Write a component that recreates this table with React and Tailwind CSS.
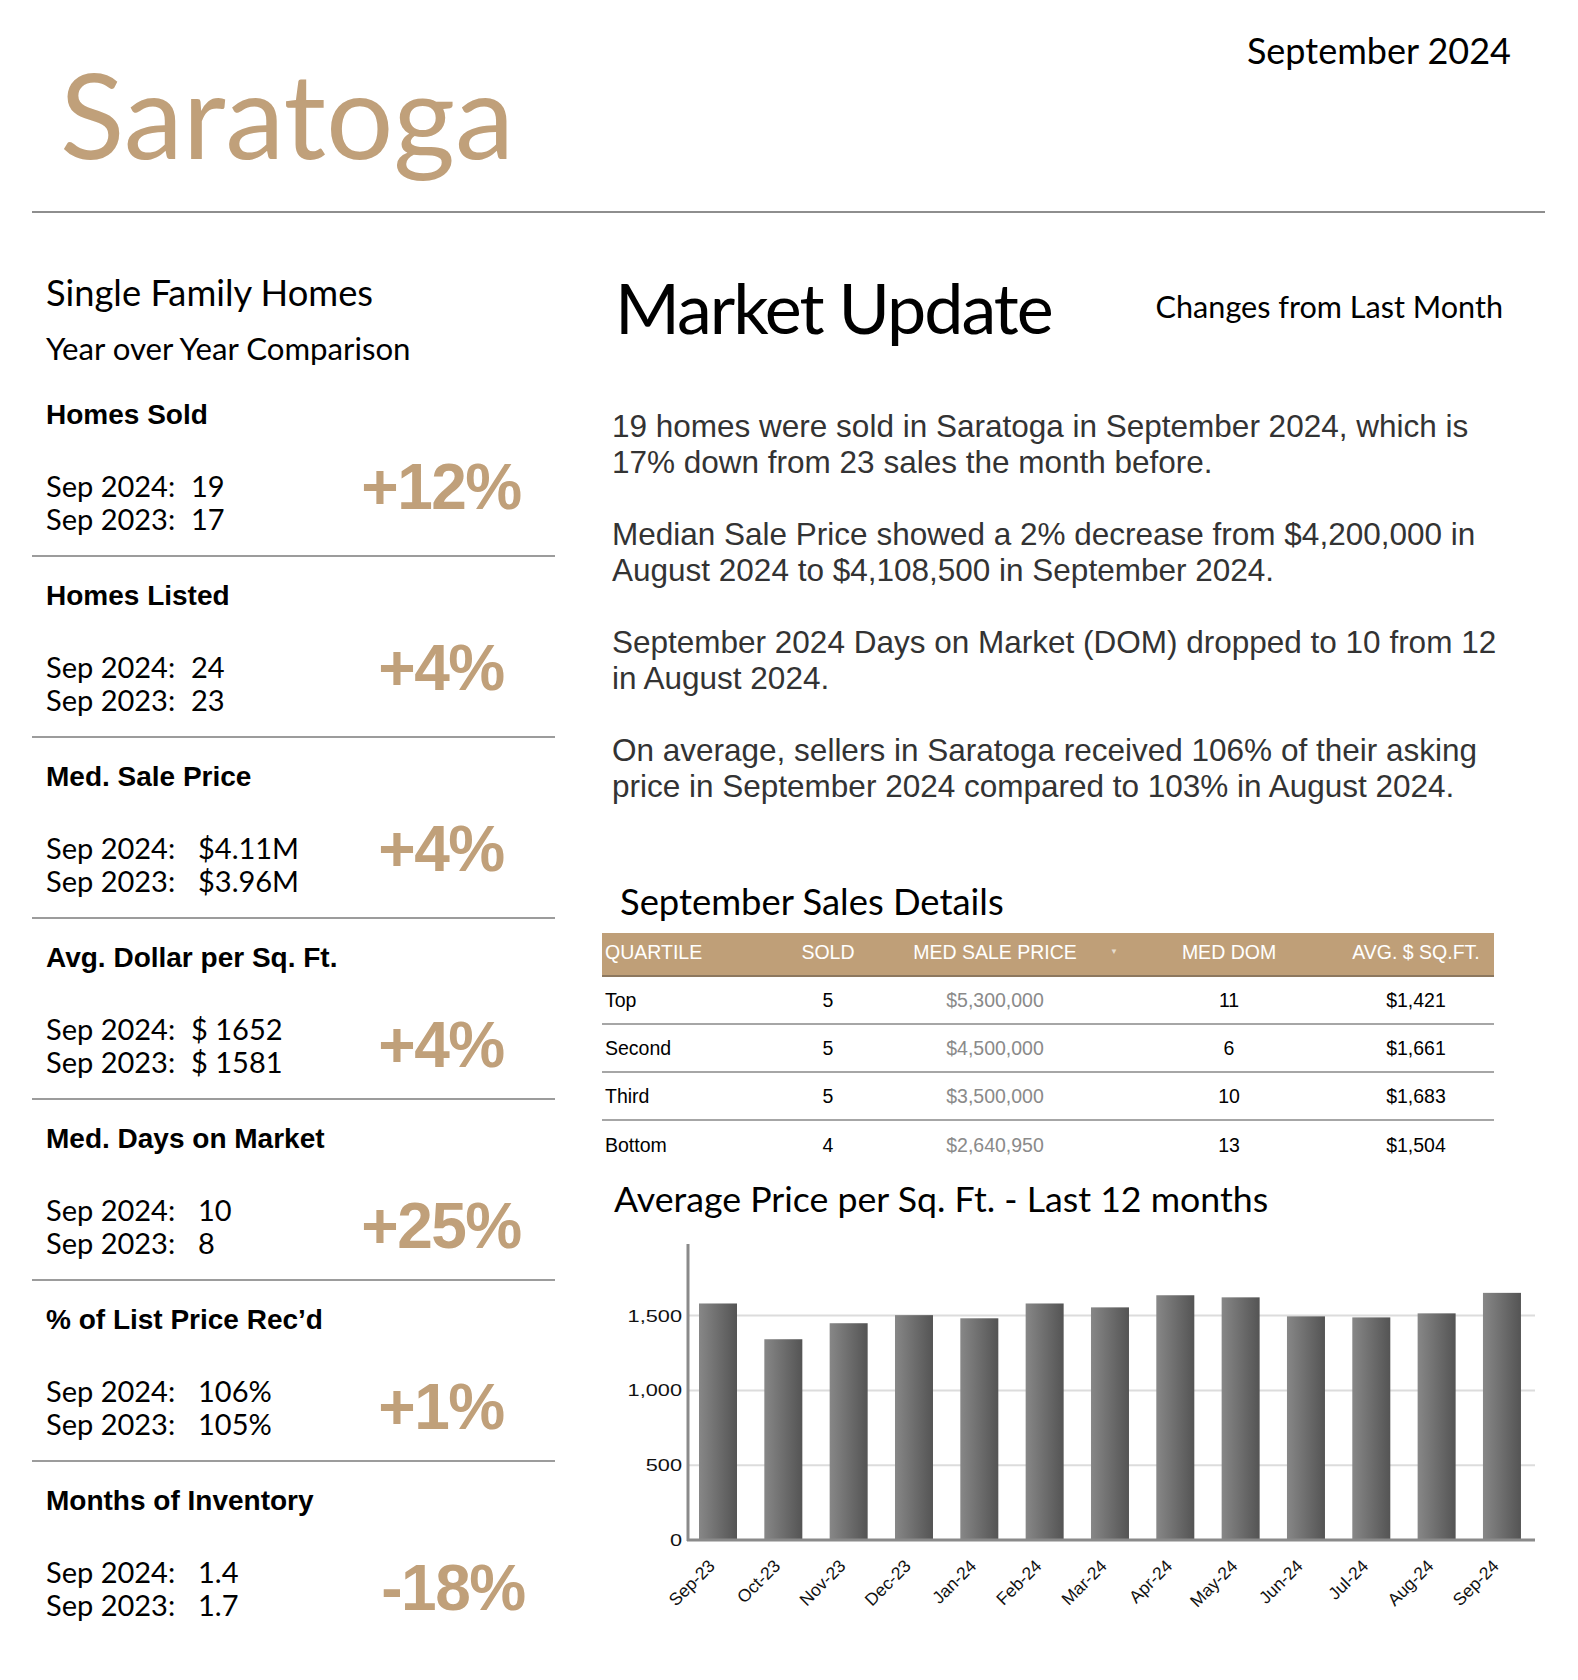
import React from "react";

const sections = [
  { title: "Homes Sold", a: "19", b: "17", pct: "+12%", wide: false, raise: true, shift: false },
  { title: "Homes Listed", a: "24", b: "23", pct: "+4%", wide: false, raise: true, shift: false },
  { title: "Med. Sale Price", a: "$4.11M", b: "$3.96M", pct: "+4%", wide: true, raise: true, shift: false },
  { title: "Avg. Dollar per Sq. Ft.", a: "$ 1652", b: "$ 1581", pct: "+4%", wide: false, raise: false, shift: false },
  { title: "Med. Days on Market", a: "10", b: "8", pct: "+25%", wide: true, raise: false, shift: false },
  { title: "% of List Price Rec\u2019d", a: "106%", b: "105%", pct: "+1%", wide: true, raise: false, shift: false },
  { title: "Months of Inventory", a: "1.4", b: "1.7", pct: "-18%", wide: true, raise: false, shift: true },
];

const paragraphs = [
  [
    "19 homes were sold in Saratoga in September 2024, which is",
    "17% down from 23 sales the month before.",
  ],
  [
    "Median Sale Price showed a 2% decrease from $4,200,000 in",
    "August 2024 to $4,108,500 in September 2024.",
  ],
  [
    "September 2024 Days on Market (DOM) dropped to 10 from 12",
    "in August 2024.",
  ],
  [
    "On average, sellers in Saratoga received 106% of their asking",
    "price in September 2024 compared to 103% in August 2024.",
  ],
];

const rows = [
  ["Top", "5", "$5,300,000", "11", "$1,421"],
  ["Second", "5", "$4,500,000", "6", "$1,661"],
  ["Third", "5", "$3,500,000", "10", "$1,683"],
  ["Bottom", "4", "$2,640,950", "13", "$1,504"],
];

const chartData = [
  ["Sep-23", 1581],
  ["Oct-23", 1342],
  ["Nov-23", 1449],
  ["Dec-23", 1503],
  ["Jan-24", 1482],
  ["Feb-24", 1581],
  ["Mar-24", 1555],
  ["Apr-24", 1636],
  ["May-24", 1622],
  ["Jun-24", 1495],
  ["Jul-24", 1488],
  ["Aug-24", 1515],
  ["Sep-24", 1652],
];

function Section({ s, first, last }) {
  return (
    <div>
      <div className={first ? "pt-[36px] pl-[14px]" : "pt-[25px] pl-[14px]"}>
        <div className="font-['Liberation_Sans',Arial,sans-serif] font-bold text-[28px] leading-none text-black whitespace-nowrap">
          {s.title}
        </div>
        <div className="flex mt-[40px] h-[66px]">
          <div className="w-[294px] font-['Lato',sans-serif] text-[29px] leading-[33px] text-black">
            <div className="flex whitespace-nowrap">
              <span className={s.wide ? "w-[152px]" : "w-[145px]"}>Sep 2024:</span>
              <span>{s.a}</span>
            </div>
            <div className="flex whitespace-nowrap">
              <span className={s.wide ? "w-[152px]" : "w-[145px]"}>Sep 2023:</span>
              <span>{s.b}</span>
            </div>
          </div>
          <div
            className={
              "w-[202px] flex items-center justify-center " +
              (s.raise ? "pb-[30px] " : "") +
              (s.shift ? "pl-[24px]" : "")
            }
          >
            <span className="font-['Liberation_Sans',Arial,sans-serif] font-bold text-[64px] leading-none tracking-[-1.5px] text-[#C0A07A] whitespace-nowrap">
              {s.pct}
            </span>
          </div>
        </div>
      </div>
      {!last && <div className="mt-[20px] h-[2px] w-[523px] bg-[#9c9c9c]" />}
    </div>
  );
}

function Chart() {
  const x0 = 86;
  const yBase = 314;
  const k = 74.8 / 500;
  const right = 933;
  const grid = [500, 1000, 1500];
  const font = "'Liberation Sans', Arial, sans-serif";
  return (
    <svg width="943" height="420" viewBox="0 0 943 420" className="block">
      <defs>
        <linearGradient id="barg" x1="0" x2="1" y1="0" y2="0">
          <stop offset="0" stopColor="#878787" />
          <stop offset="1" stopColor="#545454" />
        </linearGradient>
      </defs>
      {grid.map((v) => (
        <line
          key={v}
          x1={x0}
          x2={right}
          y1={yBase - v * k}
          y2={yBase - v * k}
          stroke="#dcdcdc"
          strokeWidth="2"
        />
      ))}
      {chartData.map(([m, v], i) => {
        const left = 97 + i * 65.33;
        const h = v * k;
        return (
          <rect key={m} x={left} y={yBase - h} width="38" height={h} fill="url(#barg)" />
        );
      })}
      <line x1={x0} x2={x0} y1="18" y2={yBase + 1} stroke="#8a8a8a" strokeWidth="3" />
      <line x1={x0 - 1} x2={right} y1={yBase} y2={yBase} stroke="#8a8a8a" strokeWidth="3" />
      {[0, 500, 1000, 1500].map((v) => {
        const ty = yBase - v * k + 6;
        return (
          <text
            key={v}
            transform={`translate(80 ${ty}) scale(1.28 1)`}
            textAnchor="end"
            fontFamily={font}
            fontSize="17"
            fill="#111"
          >
            {v === 0 ? "0" : v.toLocaleString("en-US")}
          </text>
        );
      })}
      {chartData.map(([m], i) => {
        const ax = 97 + i * 65.33 + 17;
        const ay = yBase + 27;
        return (
          <text
            key={m}
            transform={`translate(${ax} ${ay}) rotate(-45)`}
            textAnchor="end"
            fontFamily={font}
            fontSize="17.5"
            fill="#111"
          >
            {m}
          </text>
        );
      })}
    </svg>
  );
}

export default function App() {
  return (
    <div className="w-[1578px] h-[1680px] bg-white overflow-hidden font-['Lato',sans-serif] text-black">
      {/* Header */}
      <div className="flex justify-between h-[211px]">
        <div className="pl-[60px] pt-[54px] font-['Lato',sans-serif] text-[119px] leading-none text-[#C0A07A]">
          Saratoga
        </div>
        <div className="pr-[67px] pt-[32px] font-['Lato',sans-serif] text-[36px] leading-none text-black">
          September 2024
        </div>
      </div>
      <div className="ml-[32px] w-[1513px] h-[2px] bg-[#8e8e8e]" />

      {/* Body */}
      <div className="flex">
        {/* Left column */}
        <div className="w-[555px] pl-[32px] shrink-0">
          <div className="pl-[14px] font-['Lato',sans-serif]">
            <div className="mt-[61px] text-[36.3px] leading-none">Single Family Homes</div>
            <div className="mt-[23px] text-[31.2px] leading-none">Year over Year Comparison</div>
          </div>
          {sections.map((s, i) => (
            <Section key={s.title} s={s} first={i === 0} last={i === sections.length - 1} />
          ))}
        </div>

        {/* Right column */}
        <div className="flex-1 pl-[47px]">
          <div className="flex justify-between pr-[75px]">
            <div className="mt-[59px] ml-[13px] font-['Lato',sans-serif] text-[70px] leading-none tracking-[-2px]">
              Market Update
            </div>
            <div className="mt-[79px] font-['Lato',sans-serif] text-[30.6px] leading-none">
              Changes from Last Month
            </div>
          </div>

          <div className="mt-[66px] ml-[10px] font-['Liberation_Sans',Arial,sans-serif] text-[31.5px] leading-[36px] text-[#333333]">
            {paragraphs.map((p, i) => (
              <div key={i} className={i === 0 ? "" : "mt-[36px]"}>
                {p.map((line) => (
                  <div key={line} className="whitespace-nowrap">
                    {line}
                  </div>
                ))}
              </div>
            ))}
          </div>

          <div className="mt-[79px] ml-[18px] font-['Lato',sans-serif] text-[36.4px] leading-none">
            September Sales Details
          </div>

          <div className="mt-[14px] w-[892px] font-['Liberation_Sans',Arial,sans-serif] text-[19.5px]">
            <div className="relative flex items-center h-[44px] pb-[3px] bg-[#BF9F78] border-b-2 border-[#8d785f] text-white">
              <div className="w-[160px] pl-[3px]">QUARTILE</div>
              <div className="w-[132px] flex justify-center">SOLD</div>
              <div className="w-[202px] flex justify-center whitespace-nowrap">MED SALE PRICE</div>
              <div className="w-[266px] flex justify-center whitespace-nowrap">MED DOM</div>
              <div className="w-[108px] flex justify-center whitespace-nowrap">AVG. $ SQ.FT.</div>
              <span className="absolute left-[508px] top-[15px] text-[8px] leading-none text-[#e6dccd]">
                ▼
              </span>
            </div>
            {rows.map((r, i) => (
              <div
                key={r[0]}
                className={
                  "flex items-center h-[48px] text-black " +
                  (i < rows.length - 1 ? "border-b-2 border-[#a6a6a6]" : "")
                }
              >
                <div className="w-[160px] pl-[3px]">{r[0]}</div>
                <div className="w-[132px] flex justify-center">{r[1]}</div>
                <div className="w-[202px] flex justify-center text-[#8a8a8a]">{r[2]}</div>
                <div className="w-[266px] flex justify-center">{r[3]}</div>
                <div className="w-[108px] flex justify-center">{r[4]}</div>
              </div>
            ))}
          </div>

          <div className="mt-[12px] ml-[12px] font-['Lato',sans-serif] text-[35.7px] leading-none whitespace-nowrap">
            Average Price per Sq. Ft. - Last 12 months
          </div>

          <div className="mt-[9px]">
            <Chart />
          </div>
        </div>
      </div>
    </div>
  );
}
